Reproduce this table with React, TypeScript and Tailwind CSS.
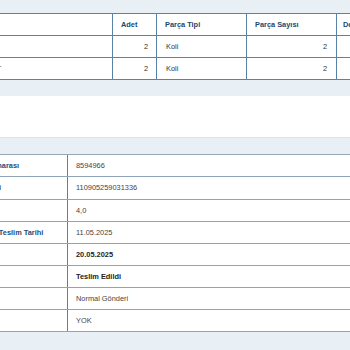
import React from "react";

const font = { fontFamily: '"Liberation Sans", Arial, sans-serif' };

type PieceRow = { name: string; qty: string; type: string; count: string; extra: string };

const pieces: PieceRow[] = [
  { name: "MOBİLYA", qty: "2", type: "Koli", count: "2", extra: "" },
  { name: "SANDALYE SET", qty: "2", type: "Koli", count: "2", extra: "" },
];

type InfoRow = { label: string; value: string; bold?: boolean; tall?: boolean };

const info: InfoRow[] = [
  { label: "Kod Numarası", value: "8594966" },
  { label: "Sevk Fişi", value: "110905259031336", tall: true },
  { label: "Desi", value: "4,0" },
  { label: "Tahmini Teslim Tarihi", value: "11.05.2025" },
  { label: "Tarih", value: "20.05.2025", bold: true },
  { label: "Durum", value: "Teslim Edildi", bold: true },
  { label: "Tür", value: "Normal Gönderi" },
  { label: "İade", value: "YOK" },
];

function PiecesTable() {
  const cols = "grid grid-cols-[176px_44px_90px_90px_90px]";
  const cell = "border-r border-[#5a82a6] flex items-center px-[9px] whitespace-nowrap";
  return (
    <div className="ml-[-64px] w-[500px] bg-white border-t border-l border-[#5a82a6]">
      <div className={`${cols} h-[22px] border-b border-[#5a82a6] text-[#21486f] font-bold`}>
        <div className={cell}>Ürün</div>
        <div className={`${cell} pl-[8px]`}>Adet</div>
        <div className={`${cell} pl-[8px]`}>Parça Tipi</div>
        <div className={`${cell} pl-[8px]`}>Parça Sayısı</div>
        <div className={`${cell} pl-[6px]`}>Desi</div>
      </div>
      {pieces.map((p) => (
        <div key={p.name} className={`${cols} h-[22px] border-b border-[#5a82a6] text-[#333]`}>
          <div className={cell}>{p.name}</div>
          <div className={`${cell} justify-end pr-[8px]`}>{p.qty}</div>
          <div className={cell}>{p.type}</div>
          <div className={`${cell} justify-end pr-[9px]`}>{p.count}</div>
          <div className={cell}>{p.extra}</div>
        </div>
      ))}
    </div>
  );
}

function InfoTable() {
  return (
    <div className="ml-[-39px] w-[500px] bg-white border-t border-[#93a8b9]">
      {info.map((r) => (
        <div
          key={r.label}
          className={`flex ${r.tall ? "h-[23px]" : "h-[22px]"} border-b border-[#8fa4b6]`}
        >
          <div className="w-[107px] shrink-0 border-r border-[#5a82a6] flex items-center px-[8px] font-bold text-[#1f4d78] whitespace-nowrap">
            {r.label}
          </div>
          <div
            className={`flex-1 flex items-center px-[8px] whitespace-nowrap ${
              r.bold ? "font-bold text-[#222]" : "text-[#444]"
            }`}
          >
            {r.value}
          </div>
        </div>
      ))}
    </div>
  );
}

export default function App() {
  return (
    <div
      style={font}
      className="w-[350px] h-[350px] overflow-hidden bg-[#e8eff5] text-[7.4px] leading-none"
    >
      <div className="pt-[13px]">
        <PiecesTable />
      </div>
      <div className="mt-[16px] h-[42px] bg-white border-b border-[#dde5ea]" />
      <div className="mt-[16px]">
        <InfoTable />
      </div>
    </div>
  );
}
